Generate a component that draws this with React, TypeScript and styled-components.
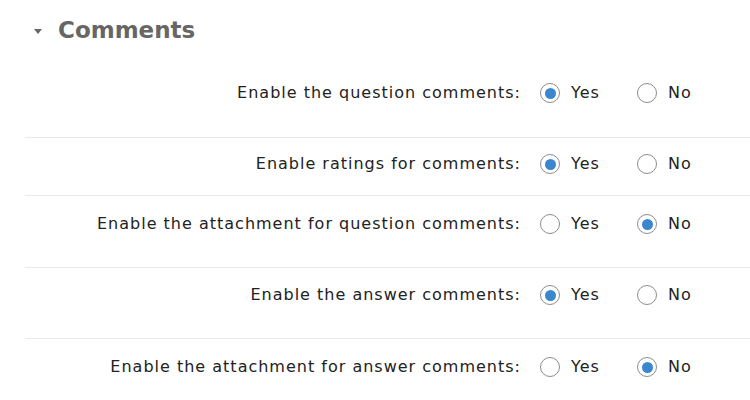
import React from "react";
import styled, { createGlobalStyle } from "styled-components";

const Global = createGlobalStyle`
  html, body { margin: 0; padding: 0; background: #fff; }
  body { font-family: "DejaVu Sans", Verdana, sans-serif; color: #222; }
`;

const Page = styled.div`
  width: 750px;
  height: 400px;
  overflow: hidden;
  padding-left: 25px;
  box-sizing: border-box;
`;

const Header = styled.div`
  display: flex;
  align-items: center;
  height: 60px;
  padding-left: 9px;
  gap: 16px;
`;

const Caret = styled.span`
  width: 0;
  height: 0;
  border-left: 4px solid transparent;
  border-right: 4px solid transparent;
  border-top: 5px solid #666;
  margin-top: 2px;
`;

const Title = styled.h2`
  margin: 0;
  font-size: 23px;
  font-weight: bold;
  color: #666;
`;

const Row = styled.div<{ $h: number; $pt: number; $last?: boolean }>`
  display: grid;
  grid-template-columns: 496px auto;
  column-gap: 19px;
  align-items: start;
  box-sizing: border-box;
  padding-top: ${(p) => p.$pt}px;
  height: ${(p) => p.$h}px;
  border-bottom: ${(p) => (p.$last ? "none" : "1px solid #e9e9e9")};
`;

const Label = styled.div`
  text-align: right;
  font-size: 16px;
  line-height: 20px;
  letter-spacing: 1px;
  color: #222;
`;

const Options = styled.div`
  display: flex;
`;

const Option = styled.label`
  display: flex;
  align-items: center;
  width: 97px;
  gap: 11px;
  font-size: 16px;
  line-height: 20px;
  letter-spacing: 1px;
  color: #222;
`;

const Radio = styled.span<{ $on: boolean }>`
  width: 20px;
  height: 20px;
  border-radius: 50%;
  border: 1px solid #8d8d8d;
  box-sizing: border-box;
  display: flex;
  align-items: center;
  justify-content: center;
  background: #fff;
  &::after {
    content: "";
    width: 11px;
    height: 11px;
    border-radius: 50%;
    background: ${(p) => (p.$on ? "#3a87cf" : "transparent")};
  }
`;

const rows = [
  { label: "Enable the question comments:", yes: true, h: 78, pt: 23 },
  { label: "Enable ratings for comments:", yes: true, h: 58, pt: 16 },
  { label: "Enable the attachment for question comments:", yes: false, h: 72, pt: 18 },
  { label: "Enable the answer comments:", yes: true, h: 71, pt: 17 },
  { label: "Enable the attachment for answer comments:", yes: false, h: 62, pt: 18 },
];

export default function App() {
  return (
    <Page>
      <Global />
      <Header>
        <Caret />
        <Title>Comments</Title>
      </Header>
      {rows.map((r, i) => (
        <Row key={i} $h={r.h} $pt={r.pt} $last={i === rows.length - 1}>
          <Label>{r.label}</Label>
          <Options>
            <Option>
              <Radio $on={r.yes} />
              Yes
            </Option>
            <Option>
              <Radio $on={!r.yes} />
              No
            </Option>
          </Options>
        </Row>
      ))}
    </Page>
  );
}
